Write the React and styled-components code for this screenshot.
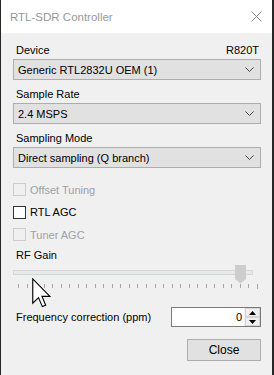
import React from 'react';
import styled, { createGlobalStyle } from 'styled-components';

const GlobalStyle = createGlobalStyle`
  html, body {
    margin: 0;
    padding: 0;
    background: #262626;
    font-family: "Liberation Sans", Arial, sans-serif;
    font-size: 11px;
    color: #000;
  }
`;

const Window = styled.div`
  position: relative;
  width: 271px;
  height: 375px;
  margin-left: 1px;
  background: #f0f0f0;
  display: flex;
  flex-direction: column;
  overflow: hidden;
`;

const TitleBar = styled.div`
  height: 33px;
  flex: none;
  background: #fff;
  display: flex;
  align-items: center;
  justify-content: space-between;
  padding: 0 10px 0 9px;
  color: #999;
  font-size: 11.5px;
`;

const Content = styled.div`
  padding: 9px 11px 0 12px;
  display: flex;
  flex-direction: column;
`;

const Field = styled.div`
  display: flex;
  flex-direction: column;
  margin-bottom: 6px;
`;

const LabelRow = styled.div`
  display: flex;
  justify-content: space-between;
  height: 16px;
  line-height: 16px;
  margin-bottom: 1px;
  padding: 0 2px 0 3px;
`;

const Combo = styled.div`
  height: 21px;
  box-sizing: border-box;
  border: 1px solid #adadad;
  background: #e1e1e1;
  display: flex;
  align-items: center;
  justify-content: space-between;
  padding: 0 6px 0 4px;
`;

const Chevron = () => (
  <svg width="9" height="5" viewBox="0 0 9 5">
    <path d="M0.5 0.5 L4.5 4.5 L8.5 0.5" fill="none" stroke="#444" strokeWidth="1" />
  </svg>
);

const Checks = styled.div`
  display: flex;
  flex-direction: column;
  gap: 9.5px;
  margin-top: 9px;
`;

const CheckRow = styled.label`
  display: flex;
  align-items: center;
  gap: 4px;
  height: 13px;
  color: ${p => (p.disabled ? '#a0a0a0' : '#000')};
`;

const Box = styled.span`
  width: 13px;
  height: 13px;
  box-sizing: border-box;
  background: ${p => (p.disabled ? '#f0f0f0' : '#fff')};
  border: 1px solid ${p => (p.disabled ? '#cccccc' : '#333')};
`;

const GainLabel = styled.div`
  margin: 6px 0 0 3px;
  height: 16px;
  line-height: 16px;
`;

const Slider = styled.div`
  position: relative;
  height: 26px;
  margin-top: 2px;
`;

const Track = styled.div`
  position: absolute;
  left: 0;
  right: 8px;
  top: 5px;
  height: 5px;
  box-sizing: border-box;
  border: 1px solid #d6d6d6;
  background: #e7eaea;
`;

const Thumb = styled.svg`
  position: absolute;
  left: 222px;
  top: 0;
`;

const Ticks = styled.div`
  position: absolute;
  left: 5px;
  top: 19px;
  width: 240px;
  height: 5px;
  display: flex;
  justify-content: space-between;
`;

const Tick = styled.span`
  width: 1px;
  height: ${p => (p.tall ? 5 : 4)}px;
  background: #a8a8a8;
`;

const FreqRow = styled.div`
  display: flex;
  align-items: center;
  justify-content: space-between;
  margin-top: 16px;
  padding-left: 3px;
`;

const Spin = styled.div`
  width: 90px;
  height: 20px;
  box-sizing: border-box;
  border: 1px solid #7a7a7a;
  background: #fff;
  display: flex;
`;

const SpinValue = styled.div`
  flex: 1;
  text-align: right;
  line-height: 18px;
  padding-right: 2px;
`;

const SpinButtons = styled.div`
  width: 15px;
  display: flex;
  flex-direction: column;
  border-left: 1px solid #f0f0f0;
`;

const SpinBtn = styled.div`
  flex: 1;
  background: #f0f0f0;
  border: 1px solid #d4d4d4;
  display: flex;
  align-items: center;
  justify-content: center;
`;

const Footer = styled.div`
  display: flex;
  justify-content: flex-end;
  margin-top: 12px;
`;

const Button = styled.button`
  width: 74px;
  height: 22px;
  box-sizing: border-box;
  border: 1px solid #adadad;
  background: #e1e1e1;
  font: inherit;
  font-size: 12px;
  color: #000;
  padding: 0;
`;

const Cursor = styled.svg`
  position: absolute;
  left: 31px;
  top: 278px;
`;

const fields = [
  { label: 'Device', extra: 'R820T', value: 'Generic RTL2832U OEM (1)' },
  { label: 'Sample Rate', value: '2.4 MSPS' },
  { label: 'Sampling Mode', value: 'Direct sampling (Q branch)' },
];

const checks = [
  { label: 'Offset Tuning', disabled: true },
  { label: 'RTL AGC' },
  { label: 'Tuner AGC', disabled: true },
];

export default function App() {
  return (
    <>
      <GlobalStyle />
      <Window>
        <TitleBar>
          <span>RTL-SDR Controller</span>
          <svg width="11" height="11" viewBox="0 0 11 11">
            <path d="M0.5 0.5 L10.5 10.5 M10.5 0.5 L0.5 10.5" stroke="#8a8a8a" strokeWidth="1" />
          </svg>
        </TitleBar>
        <Content>
          {fields.map(f => (
            <Field key={f.label}>
              <LabelRow>
                <span>{f.label}</span>
                {f.extra && <span>{f.extra}</span>}
              </LabelRow>
              <Combo>
                <span>{f.value}</span>
                <Chevron />
              </Combo>
            </Field>
          ))}
          <Checks>
            {checks.map(c => (
              <CheckRow key={c.label} disabled={c.disabled}>
                <Box disabled={c.disabled} />
                {c.label}
              </CheckRow>
            ))}
          </Checks>
          <GainLabel>RF Gain</GainLabel>
          <Slider>
            <Track />
            <Thumb width="12" height="19" viewBox="0 0 12 19">
              <path d="M0 0 H11 V14 L5.5 18.5 L0 14 Z" fill="#cdcdcd" />
            </Thumb>
            <Ticks>
              {Array.from({ length: 29 }).map((_, i) => (
                <Tick key={i} tall={i === 28} />
              ))}
            </Ticks>
          </Slider>
          <FreqRow>
            <span>Frequency correction (ppm)</span>
            <Spin>
              <SpinValue>0</SpinValue>
              <SpinButtons>
                <SpinBtn>
                  <svg width="7" height="4" viewBox="0 0 7 4"><path d="M0 4 L3.5 0 L7 4 Z" fill="#000" /></svg>
                </SpinBtn>
                <SpinBtn>
                  <svg width="7" height="4" viewBox="0 0 7 4"><path d="M0 0 L3.5 4 L7 0 Z" fill="#000" /></svg>
                </SpinBtn>
              </SpinButtons>
            </Spin>
          </FreqRow>
          <Footer>
            <Button>Close</Button>
          </Footer>
        </Content>
        <Cursor width="19" height="30" viewBox="0 0 12.5 19.5">
          <path d="M0.5 0.5 V16.5 L4.3 12.8 L6.8 18.7 L9 17.8 L6.6 12 H11.8 Z" fill="#fff" stroke="#000" strokeWidth="0.75" strokeLinejoin="miter" />
        </Cursor>
      </Window>
    </>
  );
}
